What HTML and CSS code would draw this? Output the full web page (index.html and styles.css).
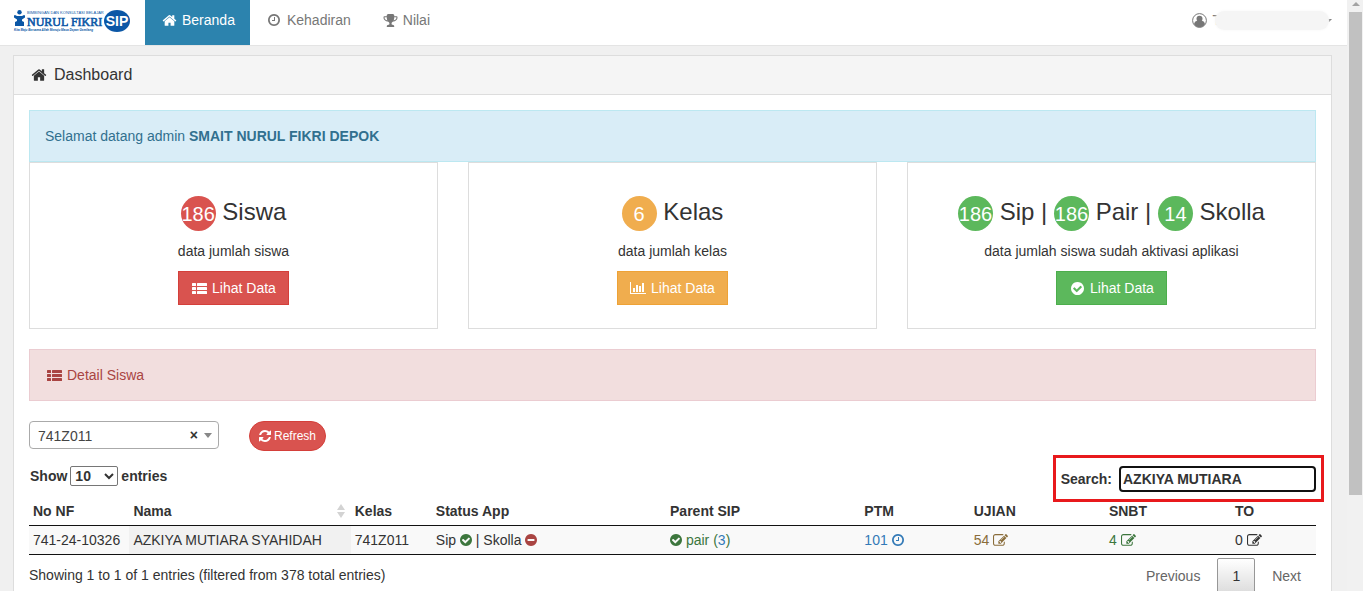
FILE: index.html
```html
<!DOCTYPE html>
<html lang="id">
<head>
<meta charset="utf-8">
<title>Dashboard</title>
<link rel="stylesheet" href="styles.css">
</head>
<body>
<svg class="sprite" aria-hidden="true">
  <symbol id="home" viewBox="0 0 1792 1792"><path d="M1472 992v480q0 26-19 45t-45 19h-384v-384h-256v384h-384q-26 0-45-19t-19-45v-480q0-1 .5-3t.5-3l575-474 575 474q1 2 1 6zm223-69l-62 74q-8 9-21 11h-3q-13 0-21-7l-692-577-692 577q-12 8-24 7-13-2-21-11l-62-74q-8-10-7-23.5t11-21.5l719-599q32-26 76-26t76 26l244 204v-195q0-14 9-23t23-9h192q14 0 23 9t9 23v408l219 182q10 8 11 21.5t-7 23.5z"/></symbol>
  <symbol id="clock" viewBox="128 128 1536 1536"><path d="M1024 544v448q0 14-9 23t-23 9h-320q-14 0-23-9t-9-23v-64q0-14 9-23t23-9h224v-352q0-14 9-23t23-9h64q14 0 23 9t9 23zm416 352q0-148-73-273t-198-198-273-73-273 73-198 198-73 273 73 273 198 198 273 73 273-73 198-198 73-273zm224 0q0 209-103 385.5t-279.5 279.5-385.5 103-385.5-103-279.5-279.5-103-385.5 103-385.5 279.5-279.5 385.5-103 385.5 103 279.5 279.5 103 385.5z"/></symbol>
  <symbol id="trophy" viewBox="0 0 1792 1792"><path d="M522 883q-74-162-74-371h-256v96q0 78 94.5 162t235.5 113zm1078-275v-96h-256q0 209-74 371 141-29 235.5-113t94.5-162zm128-128v128q0 71-41.5 143t-112 130-173 97.5-215.5 44.5q-42 54-95 95-38 34-52.5 72.5t-14.5 89.5q0 54 30.5 91t97.5 37q75 0 133.5 45.5t58.5 114.5v64q0 14-9 23t-23 9h-832q-14 0-23-9t-9-23v-64q0-69 58.5-114.5t133.5-45.5q67 0 97.5-37t30.5-91q0-51-14.5-89.5t-52.5-72.5q-53-41-95-95-113-5-215.5-44.5t-173-97.5-112-130-41.5-143v-128q0-40 28-68t68-28h288v-96q0-66 47-113t113-47h576q66 0 113 47t47 113v96h288q40 0 68 28t28 68z"/></symbol>
  <symbol id="user" viewBox="0 0 15 15"><circle cx="7.500" cy="7.500" r="6.900" fill="none" stroke="currentColor"/><circle cx="7.500" cy="5.800" r="3"/><path d="M2 11q.5-3 3-3.300h5q2.500.3 3 3.300-1.800 3.200-5.500 3.200t-5.500-3.200z"/></symbol>
  <symbol id="list" viewBox="0 0 15 15"><rect y="2" width="4" height="3" rx=".5"/><rect y="6" width="4" height="3" rx=".5"/><rect y="10" width="4" height="3" rx=".5"/><rect x="5" y="2" width="10" height="3" rx=".5"/><rect x="5" y="6" width="10" height="3" rx=".5"/><rect x="5" y="10" width="10" height="3" rx=".5"/></symbol>
  <symbol id="chart" viewBox="0 0 16 15"><path d="M0 1h1v11h15v1H0zM3 7h2v4H3zM6 4h2v7H6zM9 5h2v6H9zM12 2h2v9h-2z"/></symbol>
  <symbol id="check" viewBox="128 128 1536 1536"><path d="M1412 734q0-28-18-46l-91-90q-19-19-45-19t-45 19l-408 407-226-226q-19-19-45-19t-45 19l-91 90q-18 18-18 46 0 27 18 45l362 362q19 19 45 19 27 0 46-19l543-543q18-18 18-45zm252 162q0 209-103 385.5t-279.5 279.5-385.5 103-385.5-103-279.5-279.5-103-385.5 103-385.5 279.5-279.5 385.5-103 385.5 103 279.5 279.5 103 385.5z"/></symbol>
  <symbol id="minus" viewBox="128 128 1536 1536"><path d="M1344 960v-128q0-26-19-45t-45-19h-768q-26 0-45 19t-19 45v128q0 26 19 45t45 19h768q26 0 45-19t19-45zm320-64q0 209-103 385.5t-279.5 279.5-385.5 103-385.5-103-279.5-279.5-103-385.5 103-385.5 279.5-279.5 385.5-103 385.5 103 279.5 279.5 103 385.5z"/></symbol>
  <symbol id="refresh" viewBox="128 128 1536 1536"><path d="M1639 1056q0 5-1 7-64 268-268 434.5t-478 166.5q-146 0-282.5-55t-243.5-157l-129 129q-19 19-45 19t-45-19-19-45v-448q0-26 19-45t45-19h448q26 0 45 19t19 45-19 45l-137 137q71 66 161 102t187 36q134 0 250-65t186-179q11-17 53-117 8-23 30-23h192q13 0 22.5 9.5t9.500 22.500zm25-800v448q0 26-19 45t-45 19h-448q-26 0-45-19t-19-45 19-45l138-138q-148-137-349-137-134 0-250 65t-186 179q-11 17-53 117-8 23-30 23h-199q-13 0-22.500-9.500t-9.500-22.500v-7q65-268 270-434.500t480-166.500q146 0 284 55.500t245 156.500l130-129q19-19 45-19t45 19 19 45z"/></symbol>
  <symbol id="edit" viewBox="0 0 1792 1792"><path d="M888 1184l116-116-152-152-116 116v56h96v96h56zm440-720q-16-16-33 1l-350 350q-17 17-1 33t33-1l350-350q17-17 1-33zm80 594v190q0 119-84.5 203.5t-203.5 84.5h-832q-119 0-203.500-84.500t-84.500-203.500v-832q0-119 84.500-203.500t203.500-84.500h832q63 0 117 25 15 7 18 23 3 17-9 29l-49 49q-14 14-32 8-23-6-45-6h-832q-66 0-113 47t-47 113v832q0 66 47 113t113 47h832q66 0 113-47t47-113v-126q0-13 9-22l64-64q15-15 35-7t20 29zm-96-738l288 288-672 672h-288v-288zm444 132l-92 92-288-288 92-92q28-28 68-28t68 28l152 152q28 28 28 68t-28 68z"/></symbol>
</svg>
<div class="window">
  <div class="page">
    <header class="navbar">
      <a class="brand" href="#" aria-label="Nurul Fikri SIP">
        <svg width="118" height="24" viewBox="0 0 118 24">
          <g fill="#0b57a6">
            <circle cx="6.500" cy="3.200" r="2.200"/>
            <path d="M1 7q0-1 1-1l2 1h5l2-1q1 0 1 1v1.500l-3 2v1.500l2 1v4H2v-4l2-1v-1.500l-3-2z"/>
            <text class="logo-top" x="14" y="5">BIMBINGAN DAN KONSULTASI BELAJAR</text>
            <text class="logo-name" x="14" y="17">NURUL FIKRI</text>
            <text class="logo-motto" x="1" y="22">Kita Maju Bersama Allah Menuju Masa Depan Gemilang</text>
            <ellipse cx="104" cy="12" rx="13" ry="11"/>
          </g>
          <text class="logo-sip" x="104" y="17">SIP</text>
        </svg>
      </a>
      <nav class="menu">
        <a class="menu-item active" href="#"><svg class="icon"><use href="#home"/></svg>Beranda</a>
        <a class="menu-item" href="#"><svg class="icon icon-round"><use href="#clock"/></svg>Kehadiran</a>
        <a class="menu-item" href="#"><svg class="icon"><use href="#trophy"/></svg>Nilai</a>
      </nav>
      <a class="account" href="#" aria-label="Akun"><svg class="icon"><use href="#user"/></svg>T<span class="smudge"></span><span class="caret"></span></a>
    </header>
    <main class="panel">
      <h1 class="panel-heading"><svg class="icon icon-lg"><use href="#home"/></svg>Dashboard</h1>
      <div class="panel-body">
        <div class="alert info">Selamat datang admin <strong>SMAIT NURUL FIKRI DEPOK</strong></div>
        <div class="cards">
          <section class="card">
            <h2><span class="badge red">186</span> Siswa</h2>
            <p>data jumlah siswa</p>
            <button class="btn red" type="button"><svg class="icon"><use href="#list"/></svg>Lihat Data</button>
          </section>
          <section class="card">
            <h2><span class="badge orange">6</span> Kelas</h2>
            <p>data jumlah kelas</p>
            <button class="btn orange" type="button"><svg class="icon icon-wide"><use href="#chart"/></svg>Lihat Data</button>
          </section>
          <section class="card">
            <h2><span class="badge green">186</span> Sip | <span class="badge green">186</span> Pair | <span class="badge green">14</span> Skolla</h2>
            <p>data jumlah siswa sudah aktivasi aplikasi</p>
            <button class="btn green" type="button"><svg class="icon"><use href="#check"/></svg>Lihat Data</button>
          </section>
        </div>
        <div class="alert danger"><svg class="icon"><use href="#list"/></svg>Detail Siswa</div>
        <div class="filters">
          <div class="class-filter">
            <select class="class-select" aria-label="Kelas"><option>741Z011</option></select>
            <button class="clear" type="button" aria-label="Hapus pilihan">×</button>
            <span class="arrow"></span>
          </div>
          <button class="refresh red" type="button"><svg class="icon icon-round"><use href="#refresh"/></svg>Refresh</button>
        </div>
        <div class="table-tools">
          <label class="length">Show <select class="length-select"><option>10</option></select> entries</label>
          <div class="search"><label for="search">Search:</label><input id="search" type="text" value="AZKIYA MUTIARA"></div>
        </div>
        <table class="students">
          <colgroup><col class="c-id"><col class="c-name"><col class="c-class"><col class="c-status"><col class="c-parent"><col class="c-ptm"><col class="c-ujian"><col class="c-snbt"><col class="c-to"></colgroup>
          <thead>
            <tr><th>No NF</th><th><span class="sortable">Nama<svg width="8" height="14" viewBox="0 0 8 14"><path d="M4 0l4 6H0zM0 8h8l-4 6z"/></svg></span></th><th>Kelas</th><th>Status App</th><th>Parent SIP</th><th>PTM</th><th>UJIAN</th><th>SNBT</th><th>TO</th></tr>
          </thead>
          <tbody>
            <tr>
              <td>741-24-10326</td>
              <td class="sorted">AZKIYA MUTIARA SYAHIDAH</td>
              <td>741Z011</td>
              <td>Sip <svg class="icon icon-round t-green"><use href="#check"/></svg> | Skolla <svg class="icon icon-round t-red"><use href="#minus"/></svg></td>
              <td class="t-green"><svg class="icon icon-round"><use href="#check"/></svg> pair (<a href="#">3</a>)</td>
              <td><a href="#">101 <svg class="icon icon-round"><use href="#clock"/></svg></a></td>
              <td class="t-brown">54 <svg class="icon"><use href="#edit"/></svg></td>
              <td class="t-green">4 <svg class="icon"><use href="#edit"/></svg></td>
              <td>0 <svg class="icon"><use href="#edit"/></svg></td>
            </tr>
          </tbody>
        </table>
        <div class="table-footer">
          <div class="table-info">Showing 1 to 1 of 1 entries (filtered from 378 total entries)</div>
          <div class="pager">
            <button type="button">Previous</button>
            <button class="current" type="button">1</button>
            <button type="button">Next</button>
          </div>
        </div>
      </div>
    </main>
  </div>
  <div class="scrollbar"><span class="scroll-up"></span><span class="scroll-thumb"></span></div>
</div>
</body>
</html>
```
FILE: styles.css
```css
* { box-sizing: border-box; }
body {
  margin: 0;
  font: 14px/20px "Liberation Sans", Arial, sans-serif;
  color: #333;
  background: #f0f0f0;
}
a { color: #337ab7; text-decoration: none; }
button, select, input { font: inherit; color: inherit; margin: 0; }
.sprite { position: absolute; width: 0; height: 0; }
.icon { width: 15px; height: 15px; fill: currentColor; vertical-align: -3px; flex: none; }
.icon-lg { width: 16px; height: 16px; }
.icon-wide { width: 16px; }
.icon-round { width: 12px; height: 12px; vertical-align: -1px; }

.window { display: flex; height: 100vh; overflow: hidden; }
.page { flex: 1; min-width: 0; }

.navbar {
  display: flex;
  align-items: flex-start;
  height: 46px;
  padding: 0 15px 0 13px;
  background: #fff;
  border-bottom: 1px solid #e4e4e4;
}
.brand { width: 132px; padding-top: 9px; }
.brand svg { display: block; }
.logo-top { font: 4px "Liberation Sans", sans-serif; }
.logo-name { font: 12px "Liberation Serif", serif; stroke: #0b57a6; stroke-width: 0.6px; }
.logo-motto { font: italic bold 3px "Liberation Sans", sans-serif; }
.logo-sip { font: bold 14px "Liberation Sans", sans-serif; fill: #fff; text-anchor: middle; }
.menu { display: flex; }
.menu-item {
  display: flex;
  align-items: center;
  gap: 5px;
  height: 45px;
  padding: 0 15px 5px 17px;
  color: #777;
}
.menu-item .icon-round { margin-left: 1px; margin-right: 2px; }
.menu-item.active { color: #fff; background: #2c83ae; }
.account { display: flex; align-items: center; height: 40px; margin-left: auto; color: #777; }
.account .icon { margin-right: 5px; }
.smudge {
  position: relative;
  width: 114px;
  height: 19px;
  margin-left: -6px;
  border-radius: 10px;
  background: #f5f5f5;
  box-shadow: 0 0 3px #f5f5f5;
}
.caret { border: 3px solid transparent; border-top-color: #777; border-bottom: 0; margin-left: -3px; }

.panel { margin: 9px 15px 0 13px; background: #fff; border: 1px solid #ddd; }
.panel-heading {
  display: flex;
  align-items: center;
  gap: 7px;
  margin: 0;
  padding: 9px 17px;
  font-size: 16px;
  font-weight: normal;
  background: #f5f5f5;
  border-bottom: 1px solid #ddd;
}
.panel-body { padding: 15px; }

.alert { padding: 15px; border: 1px solid; }
.info { color: #31708f; background: #d9edf7; border-color: #bce8f1; }
.danger { display: flex; align-items: center; gap: 5px; padding-left: 17px; color: #a94442; background: #f2dede; border-color: #ebccd1; }
.cards { display: grid; grid-template-columns: repeat(3, 1fr); gap: 30px; margin-bottom: 20px; }
.card { padding: 31px 15px 23px; text-align: center; border: 1px solid #ddd; }
.card h2 { margin: 0 0 10px; font-size: 24px; line-height: 35px; font-weight: normal; }
.card p { margin: 0 0 10px; }
.badge {
  display: inline-block;
  width: 35px;
  height: 35px;
  font-size: 20px;
  line-height: 37px;
  color: #fff;
  border-radius: 50%;
  vertical-align: middle;
  white-space: nowrap;
}
.red { background: #d9534f; border-color: #d43f3a; }
.orange { background: #f0ad4e; border-color: #eea236; }
.green { background: #5cb85c; border-color: #4cae4c; }
.btn {
  display: inline-flex;
  align-items: center;
  gap: 5px;
  height: 34px;
  padding: 0 12px 0 13px;
  color: #fff;
  border-width: 1px;
  border-style: solid;
  vertical-align: top;
}
.btn.orange { padding-left: 12px; }
.btn.green .icon { padding: 1px; }

.filters { display: flex; align-items: flex-start; gap: 30px; margin: 20px 0 14px; }
.class-filter { position: relative; width: 190px; }
.class-select {
  appearance: none;
  display: block;
  width: 100%;
  height: 28px;
  padding: 2px 8px 0;
  color: #444;
  background: #fff;
  border: 1px solid #aaa;
  border-radius: 4px;
}
.clear { position: absolute; top: 4px; right: 20px; padding: 0 1px; font-weight: bold; background: none; border: 0; }
.arrow { position: absolute; top: 12px; right: 7px; border: 4px solid transparent; border-top: 5px solid #888; border-bottom: 0; }
.refresh {
  display: flex;
  align-items: center;
  gap: 3px;
  height: 30px;
  padding: 0 9px;
  font-size: 12px;
  color: #fff;
  border-width: 1px;
  border-style: solid;
  border-radius: 15px;
}

.table-tools { display: flex; justify-content: space-between; align-items: flex-start; font-weight: bold; }
.length { display: flex; gap: 3px; padding-left: 1px; margin-top: 1px; }
.length-select { width: 48px; height: 20px; padding: 0; background: #fff; border: 1px solid #767676; border-radius: 2px; }
.search { position: relative; display: flex; align-items: center; gap: 7px; margin-top: 1px; }
.search::after { content: ""; position: absolute; inset: -11px -8px -10px; border: 3px solid #e8191c; pointer-events: none; }
.search input { width: 197px; height: 26px; padding: 0 2px; background: #fff; border: 2px solid #111; border-radius: 4px; outline: 0; }

.students { width: 100%; margin-top: 5px; table-layout: fixed; border-collapse: collapse; }
.students th, .students td { height: 29px; padding: 4px; text-align: left; white-space: nowrap; }
.students th { height: 28px; border-bottom: 1px solid #111; }
.students td { background: #f9f9f9; border-bottom: 1px solid #111; }
.students td.sorted { background: #f1f1f1; }
.sortable { display: flex; justify-content: space-between; align-items: center; padding-right: 2px; }
.sortable svg { fill: #d3d3d3; }
.c-id { width: 7.8%; }
.c-name { width: 17.2%; }
.c-class { width: 6.3%; }
.c-status { width: 18.2%; }
.c-parent { width: 15.1%; }
.c-ptm { width: 8.5%; }
.c-ujian { width: 10.5%; }
.c-snbt { width: 9.8%; }
.c-to { width: 6.6%; }
.t-green { color: #3c763d; }
.t-red { color: #a94442; }
.t-brown { color: #8a6d3b; }

.table-footer { display: flex; justify-content: space-between; }
.table-info { padding-top: 10px; }
.pager { display: flex; gap: 2px; padding-top: 3px; }
.pager button { height: 36px; padding: 0 14px; color: #666; background: none; border: 1px solid transparent; border-radius: 2px; }
.pager .current { color: #333; background: linear-gradient(#fff, #dcdcdc); border-color: #979797; }

.scrollbar { display: flex; flex-direction: column; align-items: center; gap: 6px; width: 16px; background: #f1f1f1; padding: 2px 1px 0 2px; }
.scroll-up { border: 4px solid transparent; border-bottom-color: #a3a3a3; border-top: 0; }
.scroll-thumb { width: 13px; height: 82%; background: #c1c1c1; }
```
